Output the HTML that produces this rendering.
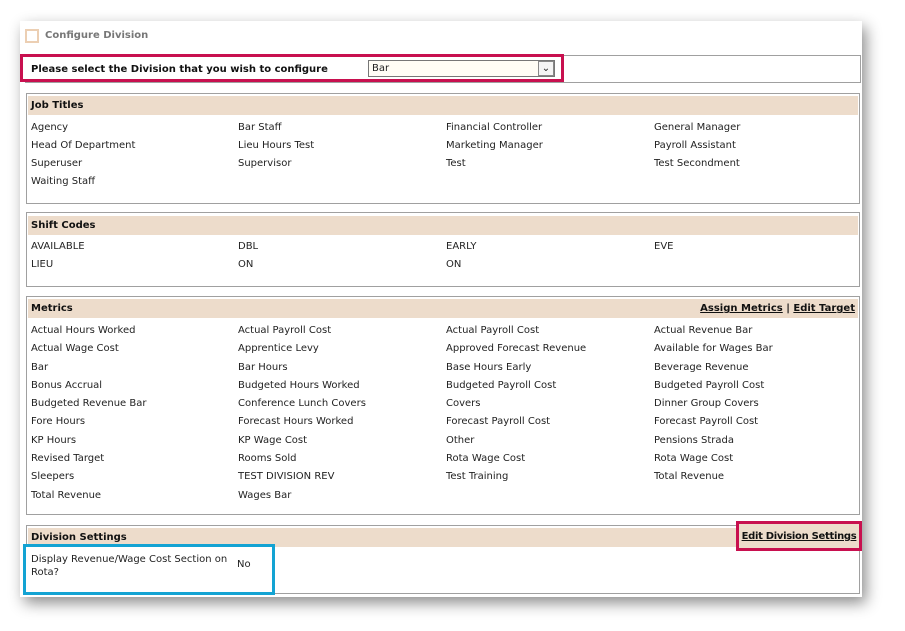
<!DOCTYPE html>
<html><head><meta charset="utf-8"><style>
*{margin:0;padding:0;box-sizing:border-box}
body{width:905px;height:631px;background:#fff;position:relative;overflow:hidden;font-family:"DejaVu Sans","Liberation Sans",sans-serif;font-size:10px;color:#222}
.card{position:absolute;left:20px;top:21px;width:842px;height:576px;background:#fff;box-shadow:4px 6px 14px rgba(0,0,0,.45)}
.a{position:absolute;white-space:nowrap}
.box{position:absolute;border:1px solid #a0a0a0;background:#fff}
.hd{position:absolute;background:#eddccb;font-weight:bold;font-size:10px;padding-left:3px;line-height:20px;color:#111;height:19px}
.lnk{font-weight:bold;text-decoration:underline;color:#111}
</style></head><body>
<div class="card"></div>
<div class="a" style="left:25px;top:29px;width:14px;height:14px;border:2px solid #eccfb3"></div>
<div class="a" style="left:45px;top:30px;font-weight:bold;color:#777">Configure Division</div>
<div class="box" style="left:25px;top:55px;width:836px;height:28px"></div>
<div class="a" style="left:20px;top:54px;width:544px;height:28px;border:3px solid #c8104f;background:#fff"></div>
<div class="a" style="left:31px;top:64px;font-weight:bold;color:#111">Please select the Division that you wish to configure</div>
<div class="a" style="left:368px;top:60px;width:187px;height:17px;border:1px solid #777;background:#fffdf5;padding-left:3px;line-height:16px">Bar</div>
<div class="a" style="left:538px;top:61px;width:16px;height:15px;border:1px solid #888;background:#f4f4f4;text-align:center;line-height:13px;font-size:10px">&#8964;</div>

<div class="box" style="left:26px;top:93px;width:834px;height:111px"></div>
<div class="hd" style="left:28px;top:96px;width:830px">Job Titles</div>
<div class="a" style="left:31px;top:122px">Agency</div><div class="a" style="left:238px;top:122px">Bar Staff</div><div class="a" style="left:446px;top:122px">Financial Controller</div><div class="a" style="left:654px;top:122px">General Manager</div>
<div class="a" style="left:31px;top:140px">Head Of Department</div><div class="a" style="left:238px;top:140px">Lieu Hours Test</div><div class="a" style="left:446px;top:140px">Marketing Manager</div><div class="a" style="left:654px;top:140px">Payroll Assistant</div>
<div class="a" style="left:31px;top:158px">Superuser</div><div class="a" style="left:238px;top:158px">Supervisor</div><div class="a" style="left:446px;top:158px">Test</div><div class="a" style="left:654px;top:158px">Test Secondment</div>
<div class="a" style="left:31px;top:176px">Waiting Staff</div>

<div class="box" style="left:26px;top:212px;width:834px;height:75px"></div>
<div class="hd" style="left:28px;top:216px;width:830px">Shift Codes</div>
<div class="a" style="left:31px;top:241px">AVAILABLE</div><div class="a" style="left:238px;top:241px">DBL</div><div class="a" style="left:446px;top:241px">EARLY</div><div class="a" style="left:654px;top:241px">EVE</div>
<div class="a" style="left:31px;top:259px">LIEU</div><div class="a" style="left:238px;top:259px">ON</div><div class="a" style="left:446px;top:259px">ON</div>

<div class="box" style="left:26px;top:296px;width:834px;height:219px"></div>
<div class="hd" style="left:28px;top:299px;width:830px">Metrics<span style="position:absolute;right:3px;top:0"><span class="lnk">Assign Metrics</span> | <span class="lnk">Edit Target</span></span></div>
<div class="a" style="left:31px;top:322px;line-height:18.3px">Actual Hours Worked<br>Actual Wage Cost<br>Bar<br>Bonus Accrual<br>Budgeted Revenue Bar<br>Fore Hours<br>KP Hours<br>Revised Target<br>Sleepers<br>Total Revenue</div>
<div class="a" style="left:238px;top:322px;line-height:18.3px">Actual Payroll Cost<br>Apprentice Levy<br>Bar Hours<br>Budgeted Hours Worked<br>Conference Lunch Covers<br>Forecast Hours Worked<br>KP Wage Cost<br>Rooms Sold<br>TEST DIVISION REV<br>Wages Bar</div>
<div class="a" style="left:446px;top:322px;line-height:18.3px">Actual Payroll Cost<br>Approved Forecast Revenue<br>Base Hours Early<br>Budgeted Payroll Cost<br>Covers<br>Forecast Payroll Cost<br>Other<br>Rota Wage Cost<br>Test Training</div>
<div class="a" style="left:654px;top:322px;line-height:18.3px">Actual Revenue Bar<br>Available for Wages Bar<br>Beverage Revenue<br>Budgeted Payroll Cost<br>Dinner Group Covers<br>Forecast Payroll Cost<br>Pensions Strada<br>Rota Wage Cost<br>Total Revenue</div>

<div class="box" style="left:26px;top:525px;width:834px;height:69px"></div>
<div class="hd" style="left:28px;top:528px;width:830px">Division Settings</div>
<div class="a" style="left:736px;top:521px;width:126px;height:30px;border:3px solid #c8104f;background:#eddccb;text-align:center;line-height:26px;letter-spacing:-0.3px"><span class="lnk">Edit Division Settings</span></div>
<div class="a" style="left:23px;top:544px;width:252px;height:51px;border:3px solid #13a3d3;background:#fff"></div>
<div class="a" style="left:31px;top:553px;line-height:13px">Display Revenue/Wage Cost Section on<br>Rota?</div>
<div class="a" style="left:237px;top:559px">No</div>
</body></html>
